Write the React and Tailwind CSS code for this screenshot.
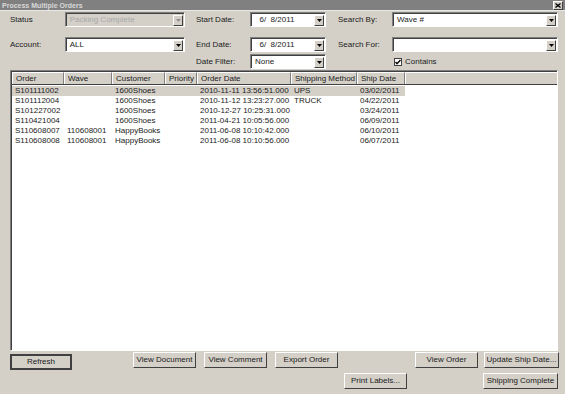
import React from "react";

const font = { fontFamily: '"Liberation Sans", Arial, sans-serif' };

const cols = [
    { key: "order", label: "Order", w: "w-[52px]" },
    { key: "wave", label: "Wave", w: "w-[48px]" },
    { key: "customer", label: "Customer", w: "w-[53px]" },
    { key: "priority", label: "Priority", w: "w-[32px]" },
    { key: "orderDate", label: "Order Date", w: "w-[94px]" },
    { key: "method", label: "Shipping Method", w: "w-[66px]" },
    { key: "shipDate", label: "Ship Date", w: "w-[48px]" },
];

const rows = [
    { order: "S101111002", wave: "", customer: "1600Shoes", priority: "", orderDate: "2010-11-11 13:56:51.000", method: "UPS", shipDate: "03/02/2011" },
    { order: "S101112004", wave: "", customer: "1600Shoes", priority: "", orderDate: "2010-11-12 13:23:27.000", method: "TRUCK", shipDate: "04/22/2011" },
    { order: "S101227002", wave: "", customer: "1600Shoes", priority: "", orderDate: "2010-12-27 10:25:31.000", method: "", shipDate: "03/24/2011" },
    { order: "S110421004", wave: "", customer: "1600Shoes", priority: "", orderDate: "2011-04-21 10:05:56.000", method: "", shipDate: "06/09/2011" },
    { order: "S110608007", wave: "110608001", customer: "HappyBooks", priority: "", orderDate: "2011-06-08 10:10:42.000", method: "", shipDate: "06/10/2011" },
    { order: "S110608008", wave: "110608001", customer: "HappyBooks", priority: "", orderDate: "2011-06-08 10:10:56.000", method: "", shipDate: "06/07/2011" },
];

const Combo = ({ value, w, disabled }) => (
    <div className={`${w} h-[15px] flex border-t border-l border-t-[#808080] border-l-[#808080] border-b border-r border-b-white border-r-white`}>
        <div className={`flex-1 flex items-center border-t border-l border-t-[#404040] border-l-[#404040] ${disabled ? "bg-[#d4d0c8] text-[#a8a8a8]" : "bg-white text-[#1a1a1a]"}`}>
            <span className="pl-[3px] text-[8px] leading-none whitespace-pre">{value}</span>
            <div className="ml-auto mr-[1px] w-[10px] h-[11px] bg-[#d4d0c8] border border-t-white border-l-white border-b-[#404040] border-r-[#404040] flex items-center justify-center">
                <svg width="5" height="3" viewBox="0 0 5 3">
                    <path d="M0 0h5L2.5 3z" fill={disabled ? "#909090" : "#000"} />
                </svg>
            </div>
        </div>
    </div>
);

const Button = ({ children, w, strong }) => (
    <div className={`${w} h-[16px] flex items-center justify-center bg-[#d4d0c8] text-[8px] text-[#1a1a1a] ${strong ? "border-2 border-[#404040]" : "border border-t-white border-l-white border-b-[#404040] border-r-[#404040]"}`}>
        {children}
    </div>
);

const Label = ({ children, w }) => <span className={`${w} text-[8px] text-[#1a1a1a]`}>{children}</span>;

export default function App() {
    return (
        <div style={font} className="w-[565px] h-[394px] bg-[#d4d0c8] flex flex-col overflow-hidden">
            <div className="h-[11px] bg-[#808080] flex items-center border-b border-b-[#e8e8e8]">
                <span className="pl-[2px] text-[7px] font-bold text-[#d8d8d8] leading-none">Process Multiple Orders</span>
                <div className="ml-auto mr-[2px] w-[10px] h-[9px] bg-[#d4d0c8] border border-t-white border-l-white border-b-[#404040] border-r-[#404040] flex items-center justify-center">
                    <svg width="6" height="5" viewBox="0 0 6 5">
                        <path d="M0.5 0.5l5 4M5.5 0.5l-5 4" stroke="#000" strokeWidth="1.3" />
                    </svg>
                </div>
            </div>

            <div className="flex h-[59px]">
                <div className="ml-[10px] flex flex-col w-[175px]">
                    <div className="mt-[1px] flex items-center">
                        <Label w="w-[55px]">Status</Label>
                        <Combo w="w-[121px]" value="Packing Complete" disabled />
                    </div>
                    <div className="mt-[10px] flex items-center">
                        <Label w="w-[55px]">Account:</Label>
                        <Combo w="w-[121px]" value="ALL" />
                    </div>
                </div>
                <div className="ml-[11px] flex flex-col w-[130px]">
                    <div className="mt-[1px] flex items-center">
                        <Label w="w-[54px]">Start Date:</Label>
                        <Combo w="w-[76px]" value="  6/  8/2011" />
                    </div>
                    <div className="mt-[10px] flex items-center">
                        <Label w="w-[54px]">End Date:</Label>
                        <Combo w="w-[76px]" value="  6/  8/2011" />
                    </div>
                    <div className="mt-[2px] flex items-center">
                        <Label w="w-[54px]">Date Filter:</Label>
                        <Combo w="w-[76px]" value="None" />
                    </div>
                </div>
                <div className="ml-[12px] flex flex-col w-[220px]">
                    <div className="mt-[1px] flex items-center">
                        <Label w="w-[54px]">Search By:</Label>
                        <Combo w="w-[166px]" value="Wave #" />
                    </div>
                    <div className="mt-[10px] flex items-center">
                        <Label w="w-[54px]">Search For:</Label>
                        <Combo w="w-[166px]" value="" />
                    </div>
                    <div className="mt-[4px] ml-[56px] flex items-center gap-[3px]">
                        <div className="w-[8px] h-[8px] bg-white border border-[#404040] flex items-center justify-center">
                            <svg width="6" height="6" viewBox="0 0 6 6">
                                <path d="M0.5 3l1.5 1.8L5.5 1" stroke="#000" strokeWidth="1.4" fill="none" />
                            </svg>
                        </div>
                        <span className="text-[8px] text-[#1a1a1a]">Contains</span>
                    </div>
                </div>
            </div>

            <div className="ml-[10px] w-[548px] h-[281px] flex border-t border-l border-t-[#808080] border-l-[#808080] border-b border-r border-b-white border-r-white">
                <div className="flex-1 flex flex-col bg-white border-t border-l border-t-[#404040] border-l-[#404040]">
                    <div className="h-[13px] flex bg-[#d4d0c8] border-b border-b-[#404040]">
                        {cols.map((c) => (
                            <div key={c.key} className={`${c.w} shrink-0 flex items-center pl-[3px] text-[8px] text-[#1a1a1a] whitespace-nowrap border-t border-l border-t-white border-l-white border-r border-r-[#808080]`}>
                                {c.label}
                            </div>
                        ))}
                        <div className="flex-1 border-t border-l border-t-white border-l-white" />
                    </div>
                    <div className="flex flex-col pt-[1px]">
                        {rows.map((r, i) => (
                            <div key={r.order} className={`h-[10px] w-[393px] flex items-center ${i === 0 ? "bg-[#d4d0c8]" : ""}`}>
                                {cols.map((c) => (
                                    <div key={c.key} className={`${c.w} shrink-0 pl-[3px] text-[8px] leading-none text-[#1a1a1a] whitespace-nowrap`}>
                                        {r[c.key]}
                                    </div>
                                ))}
                            </div>
                        ))}
                    </div>
                </div>
            </div>

            <div className="flex items-start mt-[1px]">
                <div className="ml-[10px] mt-[2px]">
                    <Button w="w-[62px]" strong>Refresh</Button>
                </div>
                <div className="ml-[61px] flex gap-[8px]">
                    <Button w="w-[63px]">View Document</Button>
                    <Button w="w-[63px]">View Comment</Button>
                    <Button w="w-[63px]">Export Order</Button>
                </div>
                <div className="ml-[77px] flex gap-[6px]">
                    <Button w="w-[63px]">View Order</Button>
                    <Button w="w-[75px]">Update Ship Date...</Button>
                </div>
            </div>
            <div className="flex mt-[3px]">
                <div className="ml-[344px]">
                    <Button w="w-[63px]">Print Labels...</Button>
                </div>
                <div className="ml-[76px]">
                    <Button w="w-[75px]">Shipping Complete</Button>
                </div>
            </div>
        </div>
    );
}
